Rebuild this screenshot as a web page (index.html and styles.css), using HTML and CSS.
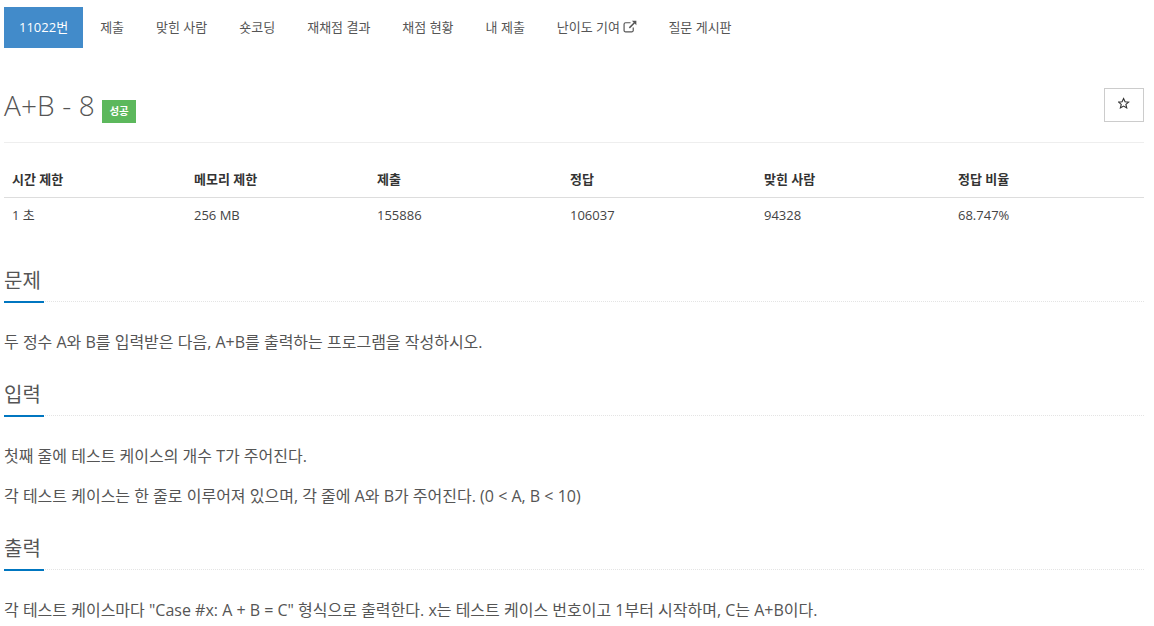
FILE: index.html
```html
<!DOCTYPE html>
<html lang="ko">
<head>
  <meta charset="UTF-8" />
  <meta name="viewport" content="width=device-width, initial-scale=1.0" />
  <title>11022번: A+B - 8</title>
  <link rel="stylesheet" href="styles.css">
</head>
<body>
  <div class="container">
    <ul class="nav-pills">
      <li class="active"><a href="#">11022번</a></li>
      <li><a href="#">제출</a></li>
      <li><a href="#">맞힌 사람</a></li>
      <li><a href="#">숏코딩</a></li>
      <li><a href="#">재채점 결과</a></li>
      <li><a href="#">채점 현황</a></li>
      <li><a href="#">내 제출</a></li>
      <li>
        <a href="#">난이도 기여
          <svg class="icon-external" viewBox="0 0 13 12" width="14" height="13">
            <path d="M9.5 7v2.6a1.4 1.4 0 0 1-1.4 1.4H2.4A1.4 1.4 0 0 1 1 9.6V3.9a1.4 1.4 0 0 1 1.4-1.4H7" fill="none" stroke="#555" stroke-width="1.1"/>
            <path d="M8.2 .6h4.2v4.2l-1.5-1.5-4.5 4.5-1-1 4.5-4.5z" fill="#555"/>
          </svg>
        </a>
      </li>
      <li><a href="#">질문 게시판</a></li>
    </ul>

    <div class="page-header">
      <h1>A+B - 8 <span class="label-success">성공</span></h1>
      <button class="btn-star" type="button">
        <svg viewBox="1 0 14 14" width="13" height="13">
          <path d="M7 1.6l1.6 3.5 3.8.4-2.9 2.5.9 3.8L7 9.8l-3.4 2 .9-3.8-2.9-2.5 3.8-.4z" fill="none" stroke="#333" stroke-width="1.2"/>
        </svg>
      </button>
    </div>

    <table class="info-table">
      <thead>
        <tr>
          <th class="col-time">시간 제한</th>
          <th class="col-memory">메모리 제한</th>
          <th class="col-submit">제출</th>
          <th class="col-stat">정답</th>
          <th class="col-stat">맞힌 사람</th>
          <th>정답 비율</th>
        </tr>
      </thead>
      <tbody>
        <tr>
          <td>1 초</td>
          <td>256 MB</td>
          <td>155886</td>
          <td>106037</td>
          <td>94328</td>
          <td>68.747%</td>
        </tr>
      </tbody>
    </table>

    <section class="problem-section">
      <div class="headline"><h2>문제</h2></div>
      <div class="problem-text">
        <p>두 정수 A와 B를 입력받은 다음, A+B를 출력하는 프로그램을 작성하시오.</p>
      </div>
    </section>

    <section class="problem-section">
      <div class="headline"><h2>입력</h2></div>
      <div class="problem-text">
        <p>첫째 줄에 테스트 케이스의 개수 T가 주어진다.</p>
        <p>각 테스트 케이스는 한 줄로 이루어져 있으며, 각 줄에 A와 B가 주어진다. (0 &lt; A, B &lt; 10)</p>
      </div>
    </section>

    <section class="problem-section">
      <div class="headline"><h2>출력</h2></div>
      <div class="problem-text">
        <p>각 테스트 케이스마다 "Case #x: A + B = C" 형식으로 출력한다. x는 테스트 케이스 번호이고 1부터 시작하며, C는 A+B이다.</p>
      </div>
    </section>
  </div>
</body>
</html>
```

FILE: styles.css
```css
* {
  box-sizing: border-box;
}

html, body {
  height: 626px;
  overflow: hidden;
}

body {
  margin: 0;
  background: #fff;
  color: #555;
  font-family: "Open Sans", "Noto Sans CJK KR", sans-serif;
  font-size: 13px;
  line-height: 1.6;
}

a {
  color: #555;
  text-decoration: none;
}

.container {
  width: 1140px;
  margin-left: 4px;
  padding-top: 7px;
}

.nav-pills {
  display: flex;
  gap: 2px;
  margin: 0;
  padding: 0;
  list-style: none;
}

.nav-pills a {
  display: block;
  height: 41px;
  padding: 10px 15px;
  line-height: 21px;
}

.nav-pills .active a {
  background: #428bca;
  color: #fff;
}

.icon-external {
  margin-right: -1px;
  vertical-align: -1px;
}

.page-header {
  display: flex;
  justify-content: space-between;
  align-items: flex-start;
  height: 95px;
  padding-top: 40px;
  border-bottom: 1px solid #eee;
}

h1 {
  margin: -1px 0 0;
  font-size: 28px;
  font-weight: 300;
  letter-spacing: .15px;
  line-height: 36px;
}

.label-success {
  display: inline-block;
  padding: 2px 7px;
  background: #5cb85c;
  color: #fff;
  font-size: 10.5px;
  font-weight: 700;
  letter-spacing: 0;
  line-height: 19px;
  vertical-align: 1px;
}

.btn-star {
  width: 40px;
  height: 34px;
  padding: 0;
  background: #fff;
  border: 1px solid #ccc;
}

.info-table {
  width: 100%;
  margin-top: 18px;
  margin-bottom: 32px;
  border-collapse: collapse;
}

.info-table th, .info-table td {
  padding: 8px;
  text-align: left;
  line-height: 20px;
}

.info-table th {
  color: #333;
  font-weight: 700;
  border-bottom: 1px solid #ddd;
}

.info-table td {
  padding-top: 7px;
  color: #444;
}

.col-time {
  width: 182px;
}

.col-memory {
  width: 183px;
}

.col-submit {
  width: 193px;
}

.col-stat {
  width: 194px;
}

.problem-section {
  margin-top: 24px;
}

.headline {
  border-bottom: 1px dotted #e4e4e4;
}

.headline h2 {
  display: inline-block;
  margin: 0 0 -2px;
  padding: 1px 0 5px;
  border-bottom: 2px solid #0076c0;
  width: 40px;
  color: #555;
  font-size: 20px;
  font-weight: 400;
  line-height: 30px;
}

.problem-text {
  margin-top: 27px;
  font-size: 16px;
}

.problem-text p {
  margin: 0 0 14px;
  line-height: 26px;
}
```
